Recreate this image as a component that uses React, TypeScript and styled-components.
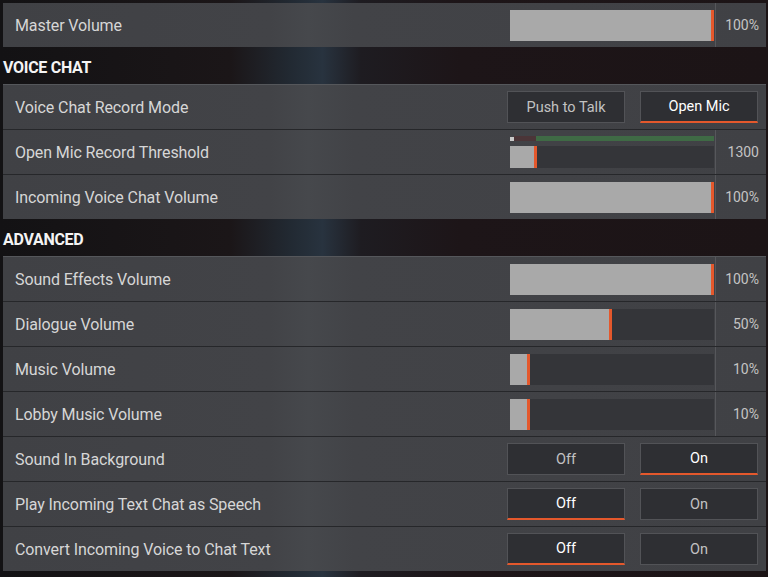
import styled, { createGlobalStyle } from "styled-components";

const ORANGE = "#e4582c";

const GlobalStyle = createGlobalStyle`
  html, body {
    margin: 0;
    padding: 0;
    background: #171315;
  }
  body {
    font-family: Roboto, "Liberation Sans", sans-serif;
  }
`;

const Page = styled.div`
  width: 768px;
  height: 577px;
  overflow: hidden;
  box-sizing: border-box;
  padding: 3px 2px 0 3px;
  background:
    linear-gradient(
      90deg,
      #131214 0%,
      #1b1618 30%,
      #222a33 38%,
      #28333f 42%,
      #1e1c21 47%,
      #1d1518 60%,
      #1c1416 100%
    );
`;

const Group = styled.div`
  display: flex;
  flex-direction: column;
  gap: 1px;
  background: #26272a;
  border-top: 1px solid #55575b;
`;

const FirstGroup = styled(Group)`
  border-top: none;
`;

const Header = styled.div`
  height: 37px;
  display: flex;
  align-items: center;
  padding-top: 4px;
  box-sizing: border-box;
  color: #f4f4f4;
  font-weight: 700;
  font-size: 16px;
  letter-spacing: -0.3px;
`;

const Row = styled.div`
  height: 44px;
  display: flex;
  align-items: center;
  background: linear-gradient(
    90deg,
    #404145 0%,
    #424347 35%,
    #46484c 40%,
    #424347 46%,
    #404145 100%
  );
`;

const Label = styled.div`
  flex: 1;
  padding-left: 12px;
  color: #d6d6d6;
  font-size: 16px;
  letter-spacing: -0.1px;
`;

const SliderBox = styled.div`
  display: flex;
  align-items: stretch;
  height: 100%;
`;

const TrackArea = styled.div`
  width: 204px;
  display: flex;
  flex-direction: column;
  justify-content: center;
  gap: 5px;
  margin-right: 1px;
`;

const Track = styled.div<{ $h: number }>`
  height: ${(p) => p.$h}px;
  background: #343539;
  display: flex;
`;

const Fill = styled.div`
  height: 100%;
  box-sizing: border-box;
  background: #a9a9a9;
  border-right: 3px solid ${ORANGE};
`;

const Meter = styled.div`
  height: 5px;
  display: flex;
  align-items: center;
`;

const MeterDot = styled.div`
  width: 4px;
  height: 4px;
  background: #c9c9c9;
`;

const MeterSeg = styled.div<{ $c: string }>`
  height: 5px;
  background: ${(p) => p.$c};
`;

const Value = styled.div`
  width: 51px;
  border-left: 1px solid #56575b;
  display: flex;
  align-items: center;
  justify-content: flex-end;
  padding-right: 7px;
  box-sizing: border-box;
  color: #c4c4c4;
  font-size: 14px;
`;

const Toggle = styled.div`
  display: flex;
  gap: 15px;
  padding-right: 8px;
`;

const Option = styled.div<{ $on: boolean }>`
  width: 118px;
  height: 32px;
  box-sizing: border-box;
  display: flex;
  align-items: center;
  justify-content: center;
  background: #2e2f33;
  border: 1px solid #525357;
  border-bottom: ${(p) => (p.$on ? `2px solid ${ORANGE}` : "1px solid #525357")};
  color: ${(p) => (p.$on ? "#ffffff" : "#c2c2c2")};
  font-size: 14.5px;
`;

const Slider = ({ value }: { value: number }) => (
  <SliderBox>
    <TrackArea>
      <Track $h={31}>
        <Fill style={{ width: `${Math.max(value, 1.5)}%` }} />
      </Track>
    </TrackArea>
    <Value>{value}%</Value>
  </SliderBox>
);

const Threshold = ({ value, max }: { value: number; max: number }) => {
  const pct = (value / max) * 100;
  return (
    <SliderBox>
      <TrackArea>
        <Meter>
          <MeterDot />
          <MeterSeg $c="#4b3538" style={{ width: `${pct - 2}%` }} />
          <MeterSeg $c="#3f6a45" style={{ flex: 1 }} />
        </Meter>
        <Track $h={22}>
          <Fill style={{ width: `${pct}%` }} />
        </Track>
      </TrackArea>
      <Value>{value}</Value>
    </SliderBox>
  );
};

const Choice = ({ options, selected }: { options: string[]; selected: number }) => (
  <Toggle>
    {options.map((o, i) => (
      <Option key={o} $on={i === selected}>
        {o}
      </Option>
    ))}
  </Toggle>
);

const advanced = [
  { label: "Sound Effects Volume", value: 100 },
  { label: "Dialogue Volume", value: 50 },
  { label: "Music Volume", value: 10 },
  { label: "Lobby Music Volume", value: 10 },
];

const toggles = [
  { label: "Sound In Background", selected: 1 },
  { label: "Play Incoming Text Chat as Speech", selected: 0 },
  { label: "Convert Incoming Voice to Chat Text", selected: 0 },
];

const App = () => (
  <>
    <GlobalStyle />
    <Page>
      <FirstGroup>
        <Row>
          <Label>Master Volume</Label>
          <Slider value={100} />
        </Row>
      </FirstGroup>
      <Header>VOICE CHAT</Header>
      <Group>
        <Row>
          <Label>Voice Chat Record Mode</Label>
          <Choice options={["Push to Talk", "Open Mic"]} selected={1} />
        </Row>
        <Row>
          <Label>Open Mic Record Threshold</Label>
          <Threshold value={1300} max={10000} />
        </Row>
        <Row>
          <Label>Incoming Voice Chat Volume</Label>
          <Slider value={100} />
        </Row>
      </Group>
      <Header>ADVANCED</Header>
      <Group>
        {advanced.map((a) => (
          <Row key={a.label}>
            <Label>{a.label}</Label>
            <Slider value={a.value} />
          </Row>
        ))}
        {toggles.map((t) => (
          <Row key={t.label}>
            <Label>{t.label}</Label>
            <Choice options={["Off", "On"]} selected={t.selected} />
          </Row>
        ))}
      </Group>
    </Page>
  </>
);

export default App;
